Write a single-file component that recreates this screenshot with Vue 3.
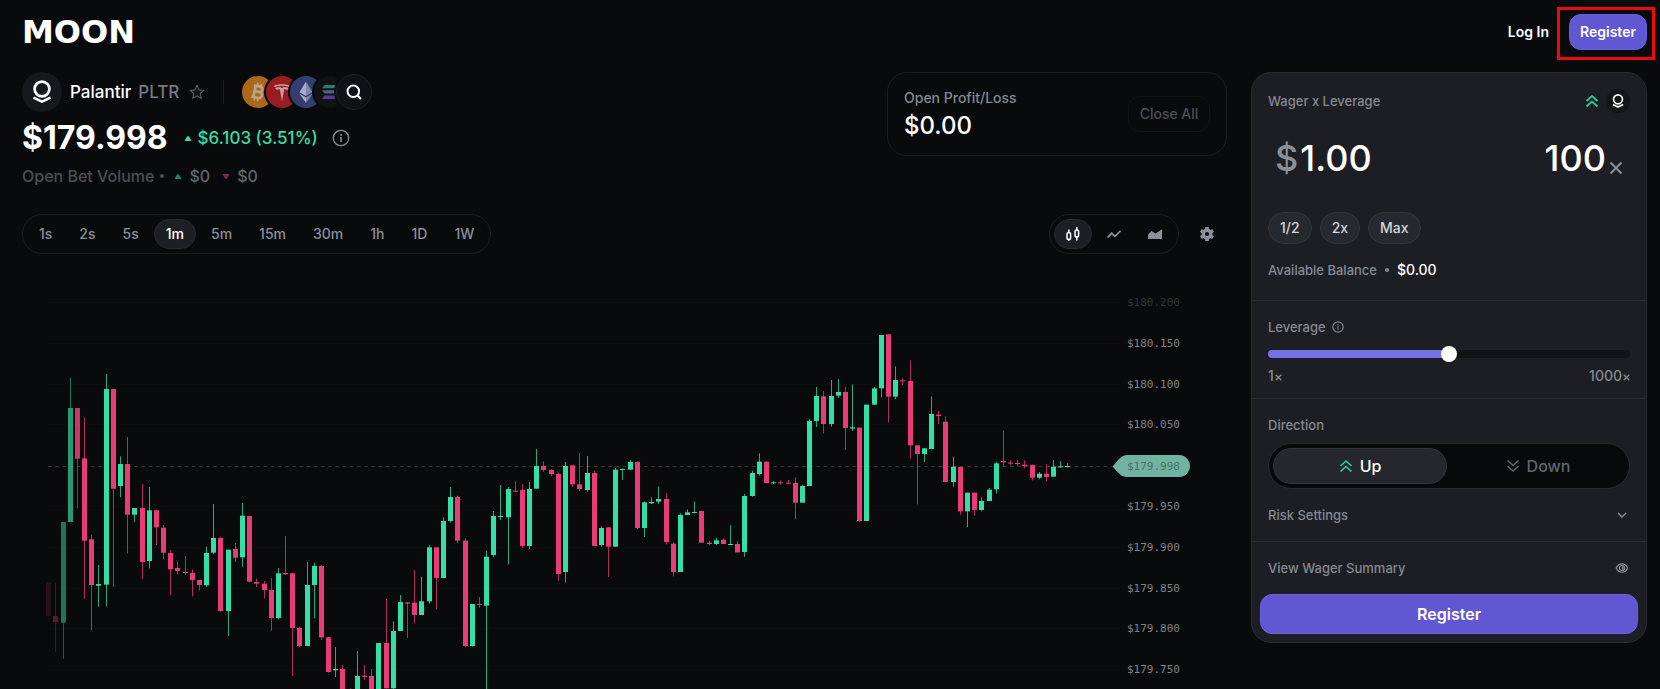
<script setup>
import { ref, computed } from 'vue'

const frames = ['1s', '2s', '5s', '1m', '5m', '15m', '30m', '1h', '1D', '1W']
const frame = ref('1m')
const chartType = ref('candles')
const direction = ref('up')
const wager = ref('1.00')
const multiplier = ref('100')
const leverage = ref(50)
const trackStyle = computed(() => ({ '--fill': leverage.value + '%' }))

// Each row: side (1 up, 0 down), high, body top, body bottom, low, in thirds of a chart unit above the block base.
const blocks = [
  { base: 318, rows: [
    [0, 667, 667, 768, 768], [0, 668, 768, 786, 876], [1, 486, 486, 788, 896], [1, 54, 144, 486, 486],
    [0, 144, 144, 296, 445], [0, 173, 295, 542, 717], [0, 524, 538, 675, 811], [1, 615, 672, 677, 740],
    [1, 42, 87, 674, 739], [0, 87, 87, 386, 681], [1, 289, 312, 378, 412], [0, 231, 312, 464, 580],
    [1, 444, 444, 464, 486], [0, 372, 444, 606, 657], [1, 381, 451, 603, 625], [0, 449, 451, 502, 555],
    [0, 495, 503, 578, 597], [0, 570, 579, 628, 706], [0, 604, 624, 633, 643], [0, 588, 636, 639, 644],
    [0, 628, 639, 660, 709], [0, 660, 660, 675, 692], [1, 560, 579, 676, 681], [1, 432, 534, 578, 583],
    [0, 530, 534, 753, 755], [1, 569, 569, 753, 828], [0, 549, 567, 593, 606], [1, 429, 467, 592, 620],
    [0, 468, 468, 665, 665], [0, 656, 666, 671, 681], [0, 663, 671, 690, 716], [0, 654, 690, 774, 812],
    [1, 624, 640, 774, 778]
  ] },
  { base: 618, rows: [
    [0, 228, 339, 343, 345], [0, 339, 340, 504, 648], [0, 500, 504, 558, 561], [1, 306, 375, 558, 558],
    [1, 308, 318, 375, 475], [0, 315, 318, 532, 540], [0, 531, 532, 636, 638], [1, 561, 627, 631, 651],
    [0, 615, 627, 740, 760], [0, 685, 687, 750, 760], [1, 573, 648, 750, 750], [0, 615, 647, 651, 660],
    [0, 627, 648, 740, 740], [1, 549, 549, 740, 740], [0, 417, 549, 685, 685], [1, 484, 513, 685, 687],
    [1, 405, 426, 513, 513], [0, 426, 427, 431, 534], [0, 330, 428, 465, 490], [1, 350, 424, 465, 465],
    [1, 256, 262, 424, 431], [0, 262, 262, 354, 448], [1, 172, 183, 354, 354], [1, 81, 111, 183, 188],
    [0, 107, 111, 242, 248], [0, 235, 242, 558, 562], [1, 432, 432, 558, 560], [0, 411, 432, 435, 443],
    [1, 272, 290, 437, 720], [1, 153, 168, 285, 292]
  ] },
  { base: 528, rows: [
    [1, 165, 258, 261, 270], [1, 171, 177, 262, 403], [0, 154, 182, 185, 186], [0, 162, 180, 348, 354],
    [1, 156, 177, 348, 357], [1, 57, 108, 176, 176], [0, 94, 108, 120, 125], [0, 118, 120, 132, 139],
    [0, 127, 132, 432, 452], [1, 96, 108, 426, 457], [0, 106, 106, 163, 171], [0, 69, 163, 177, 184],
    [1, 78, 129, 180, 185], [0, 122, 129, 348, 348], [1, 289, 294, 345, 350], [0, 292, 292, 350, 441],
    [1, 114, 119, 350, 350], [1, 115, 117, 120, 150], [1, 90, 96, 119, 119], [0, 94, 96, 294, 297],
    [1, 214, 217, 294, 321], [1, 202, 216, 220, 222], [1, 169, 207, 215, 222], [0, 189, 207, 336, 343],
    [0, 337, 341, 426, 439], [1, 250, 255, 426, 426], [1, 238, 247, 255, 255], [1, 215, 246, 248, 250],
    [0, 241, 243, 338, 338], [0, 333, 338, 342, 344], [1, 324, 331, 342, 344], [0, 326, 329, 342, 342],
    [1, 286, 342, 345, 345], [0, 333, 342, 367, 368], [1, 192, 198, 366, 380], [1, 122, 129, 198, 200]
  ] },
  { base: 198, rows: [
    [1, 400, 425, 462, 467], [0, 425, 425, 489, 489], [1, 484, 487, 490, 492], [0, 481, 487, 490, 494],
    [0, 480, 488, 490, 491], [0, 472, 489, 548, 598], [1, 494, 498, 548, 548], [1, 298, 303, 498, 498],
    [1, 201, 228, 303, 321], [0, 213, 229, 312, 340], [1, 180, 228, 312, 320], [1, 177, 216, 227, 234],
    [0, 202, 216, 324, 390], [1, 193, 322, 326, 333], [0, 323, 323, 603, 606], [1, 254, 254, 603, 603],
    [1, 201, 205, 254, 254], [1, 45, 45, 205, 232], [0, 43, 43, 230, 308], [1, 139, 180, 230, 237],
    [0, 175, 181, 184, 195], [0, 121, 183, 376, 416], [0, 376, 376, 402, 553], [1, 384, 385, 402, 426],
    [1, 229, 282, 387, 387], [0, 273, 284, 288, 312], [0, 289, 305, 486, 486], [1, 410, 440, 486, 500],
    [0, 440, 441, 574, 584], [1, 518, 518, 574, 621], [0, 518, 518, 570, 587], [1, 532, 543, 570, 574],
    [1, 504, 509, 543, 543], [1, 425, 430, 508, 521], [0, 332, 423, 427, 440], [0, 420, 428, 431, 437],
    [0, 420, 429, 432, 437], [0, 421, 434, 438, 445], [0, 433, 435, 473, 481], [1, 456, 461, 473, 478],
    [0, 432, 461, 471, 484], [1, 420, 440, 470, 470], [1, 424, 439, 442, 444], [1, 430, 438, 441, 443]
  ] }
]
const fades = [0.14, 0.35, 0.5, 0.68, 0.88]
const candles = blocks
  .flatMap(b => b.rows.map(([up, ...v]) => ({ up, v: v.map(n => (n + b.base) / 3) })))
  .map(({ up, v }, i) => ({
    up,
    x: Math.round(26.2 + i * 7.178),
    high: v[0],
    top: v[1],
    body: Math.max(1, v[2] - v[1]),
    wick: v[3] - v[0],
    opacity: fades[i] ?? 1
  }))

const levels = ['180.200', '180.150', '180.100', '180.050', null, '179.950', '179.900', '179.850', '179.800', '179.750']
  .map((price, i) => ({ price, y: Math.round(48 + i * 40.8) }))
  .filter(l => l.price)
</script>

<template>
  <div class="page">
    <header class="topbar">
      <a class="logo" href="#">MOON</a>
      <nav class="auth">
        <a class="login" href="#">Log In</a>
        <span class="marked">
          <button class="primary small" type="button">Register</button>
        </span>
      </nav>
    </header>

    <div class="columns">
      <main class="market">
        <div class="summary">
          <div class="asset">
            <div class="asset-row">
              <span class="avatar">
                <svg width="40" height="40" viewBox="0 0 40 40" fill="none" stroke="#fff" stroke-width="2.7">
                  <circle cx="20" cy="17" r="7.4" />
                  <path d="M11.4 25.6 20 29.6l8.6-4" stroke-linejoin="round" />
                </svg>
              </span>
              <h1 class="name">Palantir <span class="ticker">PLTR</span></h1>
              <button class="plain star" type="button" aria-label="Favourite">
                <svg width="16" height="16" viewBox="0 0 16 16" fill="none" stroke="#5d5f66" stroke-width="1.1" stroke-linejoin="round">
                  <path d="m8 1.3 1.9 4.6 5 .4-3.8 3.2 1.2 4.9L8 11.8l-4.3 2.6 1.2-4.9L1.100 6.300l5-.4z" />
                </svg>
              </button>
              <span class="rule"></span>
              <div class="coins">
                <span class="coin btc">
                  <svg width="32" height="32" viewBox="0 0 32 32" fill="none" stroke="#b9a58a" stroke-width="2.600">
                    <g transform="rotate(13 16 16)">
                      <path d="M12.500 10v12M10.500 10.300h6.300a2.700 2.700 0 0 1 0 5.500h-4M12.500 15.800h5a3 3 0 0 1 0 6h-7" />
                      <path d="M14 7v3M17.500 7v3M14 22v3M17.500 22v3" stroke-width="1.600" />
                    </g>
                  </svg>
                </span>
                <span class="coin tsla">
                  <svg width="32" height="32" viewBox="0 0 32 32" fill="#c5a3a5">
                    <path d="M8 9.800c5-2 11-2 16 0l-.6 1.200c-4.600-1.600-10.200-1.600-14.800 0z" />
                    <path d="M9.200 12c1.800-.6 3.400-.9 5-.9L16 12.300l1.800-1.200c1.600 0 3.200.3 5 .9-.4 1.200-1.400 1.900-2.600 1.800-.6-.5-1.400-.6-2.100-.6L16 25.500 13.900 13.200c-.7 0-1.500.1-2.100.6-1.200.1-2.200-.6-2.600-1.800z" />
                  </svg>
                </span>
                <span class="coin eth">
                  <svg width="32" height="32" viewBox="0 0 32 32">
                    <path d="M16 5.500 9.500 16.300 16 20z" fill="#a4a9c4" />
                    <path d="M16 5.500 22.500 16.300 16 20z" fill="#7f85a8" />
                    <path d="M9.500 17.700 16 27v-5.500z" fill="#a4a9c4" />
                    <path d="M22.500 17.700 16 27v-5.500z" fill="#7f85a8" />
                  </svg>
                </span>
                <span class="coin sol">
                  <svg width="32" height="32" viewBox="0 0 32 32">
                    <path d="M10.500 9h14l-2.500 3.300H8z" fill="#23806b" />
                    <path d="M8 14.300h14l2.500 3.300h-14z" fill="#46628f" />
                    <path d="M10.500 19.600h14L22 23H8z" fill="#5b3a94" />
                  </svg>
                </span>
                <button class="coin search" type="button" aria-label="Search markets">
                  <svg width="18" height="18" viewBox="0 0 18 18" fill="none" stroke="#fff" stroke-width="2">
                    <circle cx="8.300" cy="8.300" r="5.800" />
                    <path d="m12.500 12.500 3.500 3.500" />
                  </svg>
                </button>
              </div>
            </div>

            <div class="price-row">
              <strong class="price">$179.998</strong>
              <span class="change">
                <svg width="8" height="5" viewBox="0 0 8 5" fill="#35dfa4"><path d="M.5 5Q3 0 4 0t3.500 5z" /></svg>
                $6.103 (3.51%)
              </span>
              <button class="plain" type="button" aria-label="Price details">
                <svg width="18" height="18" viewBox="0 0 18 18" fill="none" stroke="#8d8f96" stroke-width="1.300">
                  <circle cx="9" cy="9" r="7.700" />
                  <path d="M9 8v5M9 5v1.700" stroke-width="1.600" />
                </svg>
              </button>
            </div>

            <div class="volume-row">
              <span>Open Bet Volume</span>
              <i class="dot"></i>
              <svg width="8" height="5" viewBox="0 0 8 5" fill="#20805f"><path d="M.5 5Q3 0 4 0t3.500 5z" /></svg>
              <span class="amount">$0</span>
              <svg class="fall" width="8" height="5" viewBox="0 0 8 5" fill="#86284b"><path d="M.5 0Q3 5 4 5t3.500-5z" /></svg>
              <span class="amount">$0</span>
            </div>
          </div>

          <section class="pnl">
            <div>
              <h2 class="label">Open Profit/Loss</h2>
              <p class="pnl-value">$0.00</p>
            </div>
            <button class="close-all" type="button" disabled>Close All</button>
          </section>
        </div>

        <div class="toolbar">
          <div class="pill">
            <button
              v-for="f in frames" :key="f" type="button"
              class="frame" :class="{ active: f === frame }" @click="frame = f"
            >{{ f }}</button>
          </div>
          <div class="tools">
            <div class="pill">
              <button class="type" :class="{ active: chartType === 'candles' }" type="button" aria-label="Candles" @click="chartType = 'candles'">
                <svg width="16" height="16" viewBox="0 0 16 16" fill="none" stroke="currentColor" stroke-width="1.500">
                  <rect x="2" y="6.500" width="3.600" height="7" rx="1.800" />
                  <rect x="10" y="4" width="3.600" height="7" rx="1.800" />
                  <path d="M3.800 3.500v3M3.800 13.500v1.500M11.800 1v3M11.800 11v3.500" />
                </svg>
              </button>
              <button class="type" :class="{ active: chartType === 'line' }" type="button" aria-label="Line" @click="chartType = 'line'">
                <svg width="16" height="16" viewBox="0 0 16 16" fill="none" stroke="currentColor" stroke-width="1.700">
                  <path d="m1.500 11.500 4.300-4.200 3.200 3 5.500-5.500" />
                </svg>
              </button>
              <button class="type" :class="{ active: chartType === 'area' }" type="button" aria-label="Area" @click="chartType = 'area'">
                <svg width="16" height="16" viewBox="0 0 16 16" fill="currentColor">
                  <path d="M1 8.500 4.500 5l4 2.500L15 3.300V13H1z" />
                </svg>
              </button>
            </div>
            <button class="plain gear" type="button" aria-label="Chart settings">
              <svg width="16" height="16" viewBox="0 0 16 16" fill="none" stroke="#8b909b">
                <circle cx="8" cy="8" r="3.800" stroke-width="3.400" />
                <path d="M8 .9v2.500M8 12.600v2.500M1.850 4.450l2.150 1.250M12 10.300l2.150 1.250M1.850 11.550 4 10.300M12 5.700l2.150-1.250" stroke-width="3.600" />
              </svg>
            </button>
          </div>
        </div>

        <svg class="chart" viewBox="0 0 1205 440">
          <g stroke="#0c0d10">
            <line v-for="l in levels" :key="l.price" x1="26" x2="1098" :y1="l.y + 0.5" :y2="l.y + 0.5" />
          </g>
          <line x1="26" x2="1090" y1="212.500" y2="212.500" stroke="#303135" stroke-dasharray="4 3.180" />
          <g v-for="(c, i) in candles" :key="i" :fill="c.up ? '#34dfa6' : '#e93c76'" :opacity="c.opacity">
            <rect :x="c.x" :y="c.high" width="1" :height="c.wick" opacity=".75" />
            <rect :x="c.x - 2" :y="c.top" width="5" :height="c.body" />
          </g>
          <text
            v-for="l in levels" :key="l.price" x="1105" :y="l.y + 4"
            class="axis" :class="{ faint: l.price === '180.200' }"
          >${{ l.price }}</text>
          <path d="M1090.500 212.500C1096 207 1098 201 1106 201h51a11 11 0 0 1 0 22h-51c-8 0-10-5-15.500-10.500z" fill="#70b3a0" />
          <text x="1105" y="216" class="axis current">$179.998</text>
        </svg>
      </main>

      <aside class="ticket">
        <section class="block wager">
          <div class="line">
            <h2 class="label">Wager x Leverage</h2>
            <span class="badges">
              <svg width="14" height="14" viewBox="0 0 14 14" fill="none" stroke="#2fc793" stroke-width="1.900">
                <path d="m1.500 7 5.500-5 5.500 5M1.500 12.500l5.500-5 5.500 5" />
              </svg>
              <span class="mini">
                <svg width="24" height="24" viewBox="0 0 24 24" fill="none" stroke="#fff" stroke-width="1.700">
                  <circle cx="12" cy="10.300" r="4.500" />
                  <path d="m6.800 15.600 5.200 2.500 5.200-2.500" stroke-linejoin="round" />
                </svg>
              </span>
            </span>
          </div>
          <div class="amounts">
            <label class="stake"><span class="currency">$</span><input v-model="wager" class="figure" aria-label="Wager" /></label>
            <label class="times">
              <input v-model="multiplier" class="figure right" aria-label="Multiplier" />
              <svg width="14" height="14" viewBox="0 0 14 14" stroke="#8b8f98" stroke-width="2"><path d="m1.500 1.500 11 11M12.500 1.500l-11 11" /></svg>
            </label>
          </div>
          <div class="chips">
            <button type="button">1/2</button>
            <button type="button">2x</button>
            <button type="button">Max</button>
          </div>
          <p class="balance">Available Balance <i class="dot"></i> <b>$0.00</b></p>
        </section>

        <section class="block leverage">
          <label class="label" for="leverage">
            Leverage
            <svg width="12" height="12" viewBox="0 0 12 12" fill="none" stroke="#7d818b" stroke-width="1.200">
              <circle cx="6" cy="6" r="5.200" />
              <path d="M6 5.300v3.500M6 3v1.400" />
            </svg>
          </label>
          <input id="leverage" v-model="leverage" class="slider" type="range" min="0" max="100" :style="trackStyle" />
          <div class="line scale">
            <span>1<svg width="7" height="7" viewBox="0 0 7 7" stroke="currentColor" stroke-width="1.300"><path d="m.7.7 5.600 5.600M6.300.7.700 6.300" /></svg></span>
            <span>1000<svg width="7" height="7" viewBox="0 0 7 7" stroke="currentColor" stroke-width="1.300"><path d="m.7.7 5.600 5.600M6.300.7.700 6.300" /></svg></span>
          </div>
        </section>

        <section class="block direction">
          <h2 class="label">Direction</h2>
          <div class="switch">
            <button type="button" :class="{ on: direction === 'up' }" @click="direction = 'up'">
              <svg width="14" height="14" viewBox="0 0 14 14" fill="none" stroke="#34cf9b" stroke-width="1.600">
                <path d="m1.500 7 5.500-5 5.500 5M1.500 12.500l5.500-5 5.500 5" />
              </svg>
              Up
            </button>
            <button type="button" :class="{ on: direction === 'down' }" @click="direction = 'down'">
              <svg width="14" height="14" viewBox="0 0 14 14" fill="none" stroke="currentColor" stroke-width="1.600">
                <path d="m1.500 1.500 5.500 5 5.500-5M1.500 7l5.500 5 5.500-5" />
              </svg>
              Down
            </button>
          </div>
          <button class="plain line risk" type="button">
            Risk Settings
            <svg width="16" height="16" viewBox="0 0 16 16" fill="none" stroke="#8b8f98" stroke-width="1.400"><path d="m4 6 4 4 4-4" /></svg>
          </button>
        </section>

        <section class="block finish">
          <button class="plain line view" type="button">
            View Wager Summary
            <svg width="16" height="16" viewBox="0 0 16 16" fill="none" stroke="#8b8f98" stroke-width="1.200">
              <path d="M2.200 8C5 2.400 11 2.400 13.800 8 11 13.600 5 13.600 2.200 8z" />
              <circle cx="8" cy="8" r="2.500" />
              <path d="M8 6.800A1.200 1.200 0 0 1 8 9.200" />
            </svg>
          </button>
          <button class="primary wide" type="button">Register</button>
        </section>
      </aside>
    </div>
  </div>
</template>

<style>
html, body {
  margin: 0;
  background: #090a0c;
}
</style>

<style scoped>
.page {
  box-sizing: border-box;
  height: 100vh;
  overflow: hidden;
  padding: 0 13px 0 22px;
  background: #090a0c;
  color: #fff;
  font: 500 14px/20px Inter, "Liberation Sans", sans-serif;
}
.page *, .page *::before { box-sizing: border-box; }
button, input {
  font: inherit;
  color: inherit;
  margin: 0;
}
button { cursor: pointer; }
h1, h2, p { margin: 0; font: inherit; }
svg { display: block; flex: none; }
a { color: inherit; text-decoration: none; }
.plain { background: none; border: 0; padding: 0; display: flex; align-items: center; }
.label { color: #858993; }
.line { display: flex; align-items: center; justify-content: space-between; }
.dot { width: 4px; height: 4px; border-radius: 50%; background: #85888f; }

.topbar { display: flex; align-items: center; justify-content: space-between; height: 64px; }
.logo { font: 700 32px/40px "DejaVu Sans", sans-serif; }
.auth { display: flex; align-items: center; gap: 20px; font-weight: 600; }
.marked { position: relative; display: flex; }
.marked::before {
  content: "";
  position: absolute;
  inset: -7px -8px -10px -12px;
  border: 3px solid #ee0a0a;
}
.primary {
  border: 1px solid #6c60de;
  border-radius: 12px;
  background: #6257d2;
  font-weight: 600;
}
.small { height: 36px; padding: 0 8px; min-width: 78px; }

.columns {
  display: grid;
  grid-template-columns: minmax(0, 1fr) 396px;
  gap: 24px;
  align-items: start;
  padding-top: 8px;
}
.summary { display: flex; justify-content: space-between; align-items: flex-start; }
.asset-row, .price-row, .volume-row { display: flex; align-items: center; }
.asset-row { height: 40px; }
.avatar { border-radius: 50%; background: #17181b; }
.name { display: flex; gap: 7px; margin-left: 8px; font-size: 17px; line-height: 24px; }
.ticker { color: #777a81; }
.star { margin-left: 10px; }
.rule { width: 1px; height: 24px; margin: 0 18px; background: #1c1d20; }
.coins { display: flex; align-items: center; }
.coin {
  width: 32px;
  height: 32px;
  margin-right: -8px;
  border-radius: 50%;
  box-shadow: 0 0 0 2px #090a0c;
  position: relative;
}
.btc { background: #aa6818; }
.tsla { background: #991c20; }
.eth { background: #343d70; }
.sol { background: #111216; }
.search {
  display: grid;
  place-items: center;
  width: 36px;
  height: 36px;
  margin-left: -2px;
  border: 1px solid #202124;
  background: #101114;
  padding: 0;
}
.price-row { height: 32px; margin-top: 10px; }
.price { font-size: 32px; line-height: 32px; font-weight: 700; }
.change { display: flex; align-items: center; gap: 6px; margin: 0 14px 0 16px; color: #35dfa4; font-size: 17px; }
.volume-row { height: 24px; margin-top: 10px; color: #4c4e52; font-size: 16px; line-height: 24px; }
.volume-row .dot { margin: 0 10px 0 6px; background: #4c4e52; }
.amount { margin-left: 7px; color: #64666b; }
.fall { margin-left: 12px; }

.pnl {
  display: flex;
  justify-content: space-between;
  align-items: center;
  width: 340px;
  min-height: 84px;
  padding: 14px 16px;
  border: 1px solid #1c1d20;
  border-radius: 20px;
}
.pnl-value { margin-top: 4px; font-size: 24px; line-height: 28px; }
.close-all {
  height: 36px;
  padding: 0 9px;
  min-width: 82px;
  border: 1px solid #121316;
  border-radius: 12px;
  background: none;
  color: #4d4f54;
}

.toolbar { display: flex; justify-content: space-between; margin-top: 26px; }
.pill {
  display: flex;
  gap: 3px;
  height: 40px;
  padding: 4px;
  border: 1px solid #1c1d20;
  border-radius: 20px;
}
.frame, .type {
  border: 1px solid transparent;
  border-radius: 15px;
  background: none;
  color: #8b8f99;
}
.frame { padding: 0 11px; }
.type { display: grid; place-items: center; width: 38px; padding: 0; }
.frame.active, .type.active { background: #1e1f25; border-color: #282a2f; color: #fff; }
.tools { display: flex; align-items: center; gap: 20px; }
.gear { padding-right: 12px; }

.chart { width: 100%; height: auto; }
.axis { font: 400 11px "DejaVu Sans Mono", monospace; fill: #808286; }
.faint { fill: #303134; }
.current { fill: #47756a; }

.ticket {
  border: 1px solid #292b30;
  border-radius: 20px;
  background: #1c1e23;
  overflow: hidden;
}
.ticket .label, .risk, .view, .balance { font-size: 13px; }
.block { padding: 0 16px; }
.block + .block { border-top: 1px solid #292b31; }
.wager { padding-top: 16px; padding-bottom: 20px; }
.wager .line { height: 24px; }
.badges { display: flex; align-items: center; gap: 7px; }
.mini { border-radius: 50%; background: #141518; }
.amounts {
  display: flex;
  justify-content: space-between;
  margin-top: 23px;
  padding: 0 7px;
  font-size: 36px;
  line-height: 44px;
}
.stake, .times { display: flex; align-items: center; }
.currency { color: #8b8f98; margin-right: 2px; }
.figure { width: 120px; height: 44px; padding: 0; border: 0; background: none; outline: 0; }
.right { text-align: right; }
.times { gap: 3px; }
.times svg { align-self: flex-end; margin-bottom: 5px; }
.chips { display: flex; gap: 8px; margin-top: 32px; }
.chips button {
  height: 32px;
  padding: 0 11px;
  border: 1px solid #34363c;
  border-radius: 16px;
  background: #272930;
  color: #d4d5d8;
}
.balance { display: flex; align-items: center; gap: 8px; margin-top: 16px; color: #858993; }
.balance b { color: #fff; font-size: 14px; font-weight: 500; }
.leverage { padding-top: 16px; padding-bottom: 12px; }
.leverage .label { display: flex; align-items: center; gap: 6px; }
.slider {
  display: block;
  appearance: none;
  width: 100%;
  height: 16px;
  margin-top: 9px;
  background: none;
}
.slider::-webkit-slider-runnable-track {
  height: 8px;
  border-radius: 4px;
  background: linear-gradient(90deg, #7570e3 var(--fill), #121317 var(--fill));
}
.slider::-webkit-slider-thumb {
  appearance: none;
  width: 16px;
  height: 16px;
  margin-top: -4px;
  border-radius: 50%;
  background: #fff;
}
.scale { margin-top: 4px; color: #858993; }
.scale span { display: flex; align-items: center; gap: 1px; }
.scale svg { margin-top: 3px; }
.direction { padding-top: 16px; padding-bottom: 16px; }
.switch {
  display: grid;
  grid-template-columns: 1fr 1fr;
  gap: 4px;
  height: 46px;
  margin: 8px 0 16px;
  padding: 4px;
  border: 1px solid #292b30;
  border-radius: 23px;
  background: #08090a;
}
.switch button {
  display: flex;
  align-items: center;
  justify-content: center;
  gap: 7px;
  border: 1px solid transparent;
  border-radius: 18px;
  background: none;
  color: #63666e;
  font-size: 16px;
}
.switch .on { background: #25272d; border-color: #34363b; color: #fff; }
.risk, .view { width: 100%; color: #858993; height: 20px; }
.finish { padding: 16px 8px 8px; }
.view { padding: 0 8px; }
.wide { width: 100%; height: 40px; margin-top: 16px; font-size: 16px; }
</style>
